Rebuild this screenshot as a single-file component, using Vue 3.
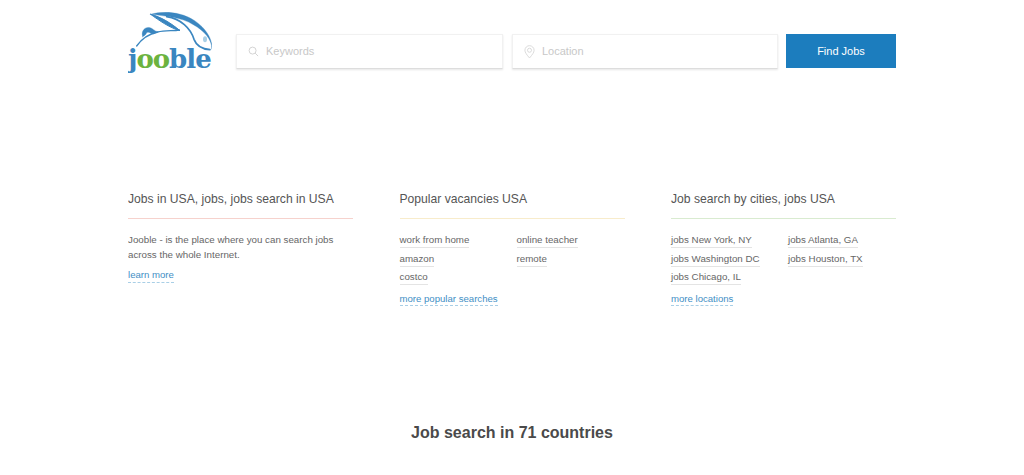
<script setup>
const cols = [
  { title: 'Jobs in USA, jobs, jobs search in USA', cls: 'red' },
  { title: 'Popular vacancies USA', cls: 'yellow', more: 'more popular searches', left: ['work from home', 'amazon', 'costco'], right: ['online teacher', 'remote'] },
  { title: 'Job search by cities, jobs USA', cls: 'green', more: 'more locations', left: ['jobs New York, NY', 'jobs Washington DC', 'jobs Chicago, IL'], right: ['jobs Atlanta, GA', 'jobs Houston, TX'] }
]
</script>

<template>
  <div class="page">
    <header class="header">
      <a class="logo">
        <svg class="rabbit" width="84" height="40" viewBox="24 36 252 120" fill="none" stroke="#3a86c0" stroke-linecap="round">
          <path d="M92 43 C125 33 180 33 224 62 C256 84 278 115 276 148 C276 118 252 92 220 74 C185 52 135 48 92 43 Z" fill="#3a86c0" stroke-width="1"/>
          <path d="M92 43 C122 50 154 70 180 92 C150 84 118 62 92 43 Z" fill="#3a86c0" stroke-width="3"/>
          <path d="M140 50 C182 56 212 85 222 118 C228 134 242 147 270 149" stroke-width="5"/>
          <path d="M50 138 C64 118 85 102 113 96 C135 91 160 93 178 90" stroke-width="4"/>
          <path d="M68 110 C62 92 76 79 90 83 C98 85 102 92 114 96 L100 102 C92 100 86 94 80 98 C78 102 76 106 68 110 Z" fill="#3a86c0" stroke-width="1"/>
          <ellipse cx="255" cy="118" rx="6" ry="9" fill="#a9cfe6" stroke="none"/>
        </svg>
        <span class="word"><i class="b">j</i><i class="g">oo</i><i class="b">ble</i></span>
      </a>
      <form class="search" @submit.prevent>
        <label class="field">
          <svg width="11" height="11" viewBox="0 0 12 12" fill="none" stroke="#d0d0d0"><circle cx="5" cy="5" r="3.8"/><path d="M7.8 7.8 L11 11"/></svg>
          <span>Keywords</span>
        </label>
        <label class="field">
          <svg width="11" height="14" viewBox="0 0 12 15" fill="none" stroke="#d8d8d8"><path d="M6 14 C3 10.5 1 8 1 5.6 A5 5 0 0 1 11 5.6 C11 8 9 10.5 6 14 Z"/><circle cx="6" cy="5.6" r="2.2"/></svg>
          <span>Location</span>
        </label>
        <button class="btn" type="button">Find Jobs</button>
      </form>
    </header>

    <section class="columns">
      <div v-for="c in cols" :key="c.title" class="col">
        <h3 class="title" :class="c.cls">{{ c.title }}</h3>
        <template v-if="c.left">
          <div class="links">
            <ul><li v-for="l in c.left" :key="l"><a>{{ l }}</a></li></ul>
            <ul><li v-for="l in c.right" :key="l"><a>{{ l }}</a></li></ul>
          </div>
          <a class="more">{{ c.more }}</a>
        </template>
        <template v-else>
          <p class="desc">Jooble - is the place where you can search jobs across the whole Internet.</p>
          <a class="more learn">learn more</a>
        </template>
      </div>
    </section>

    <h2 class="countries">Job search in 71 countries</h2>
  </div>
</template>

<style>
html, body { margin: 0; background: #fff; overflow: hidden; }
</style>

<style scoped>
.page { width: 768px; margin: 0 auto; font-family: "Liberation Sans", Arial, sans-serif; color: #555; height: 475px; overflow: hidden; }
.header { display: flex; padding-top: 12px; height: 76px; }
.logo { position: relative; display: block; width: 84px; height: 64px; flex: none; }
.rabbit { display: block; }
.word { position: absolute; left: 0; top: 32px; font: bold 26px/30px "DejaVu Serif", serif; letter-spacing: -1px; }
.word i { font-style: normal; }
.b { color: #3a86c0; }
.g { color: #6cb33f; }
.search { display: flex; margin: 22px 0 0 24px; gap: 9px; height: 34px; }
.field { box-sizing: border-box; width: 267px; height: 35px; display: flex; align-items: center; gap: 7px; padding-left: 11px; background: #fff; border: 1px solid #f1f1f1; border-bottom-color: #ddd; box-shadow: 0 1px 2px rgba(0,0,0,.1); font-size: 11px; color: #c8c8c8; }
.field span { position: relative; top: -1px; }
.field + .field { width: 266px; }
.btn { width: 110px; height: 34px; margin-left: -1px; background: #1c7dbe; border: 0; color: #fff; font: 11px "Liberation Sans", sans-serif; }
.columns { display: flex; justify-content: space-between; margin-top: 91px; }
.col { width: 225px; }
.title { margin: 0; height: 29px; border-bottom: 1px solid; font-weight: normal; font-size: 12.15px; line-height: 20px; padding-top: 10px; color: #555; box-sizing: content-box; }
.title.red { border-bottom-color: #f6d2cd; }
.title.yellow { border-bottom-color: #f8eccb; }
.title.green { border-bottom-color: #d9ebd0; }
.desc { margin: 13px 0 0; font-size: 9.75px; line-height: 15px; color: #666; }
.links { display: flex; margin-top: 13px; }
.links ul { list-style: none; margin: 0; padding: 0; width: 117px; flex: none; }
.links li { height: 18.7px; font-size: 9.75px; line-height: 15px; }
.links a { display: inline-block; color: #666; border-bottom: 1px solid #e4e4e4; line-height: 14px; }
.more { display: inline-block; margin-top: 0; font-size: 9.6px; line-height: 13px; color: #3f8fc5; border-bottom: 1px dashed #a9cfe6; }
.learn { margin-top: 5px; line-height: 15px; }
.countries { margin: 117px 0 0; text-align: center; font-size: 16px; line-height: 20px; color: #4a4a4a; }
</style>
